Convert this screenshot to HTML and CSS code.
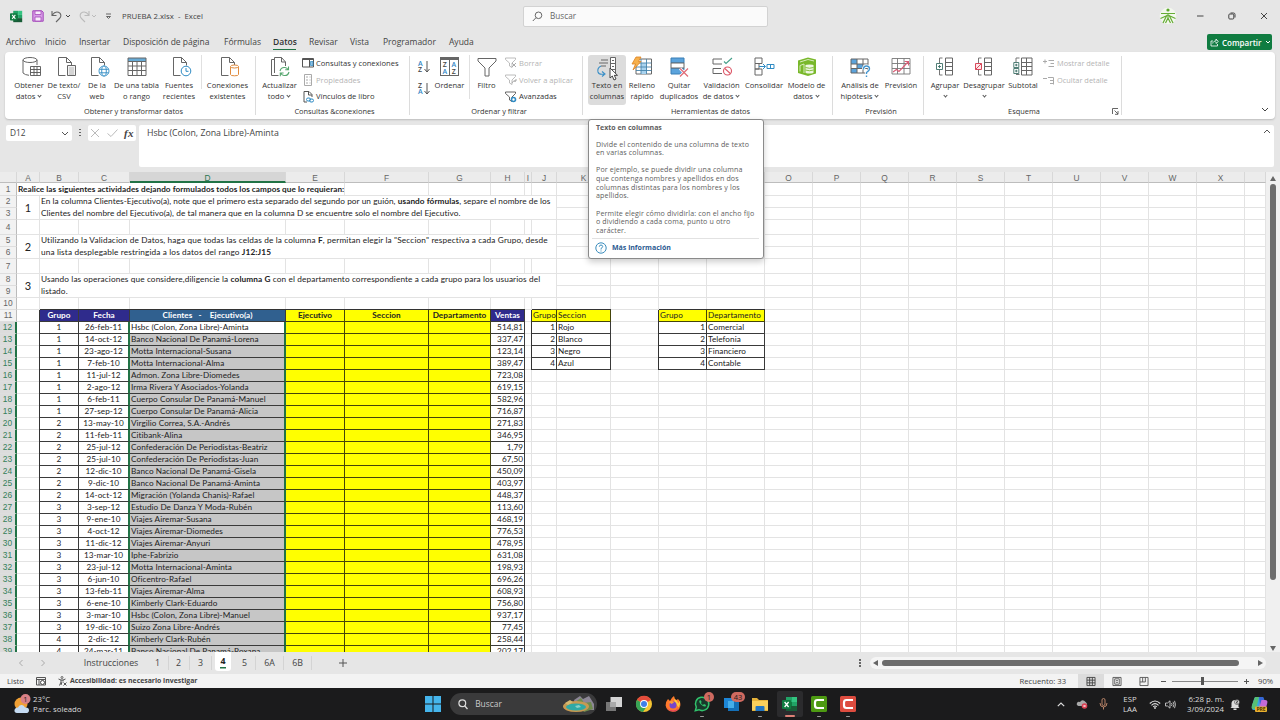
FILE: index.html
```html
<!DOCTYPE html>
<html lang="es">
<head>
  <meta charset="UTF-8">
  <meta name="viewport" content="width=device-width, initial-scale=1.0">
  <title>PRUEBA 2.xlsx - Excel</title>
  <link rel="stylesheet" href="styles.css">
</head>
<body>

<svg class="defs">
  <symbol id="chev" viewBox="0 0 6 4"><path d="M1 1l2 2 2-2" fill="none" stroke="currentColor"/></symbol>
  <symbol id="doc" viewBox="0 0 20 20"><path d="M1.500 .5h8l5 5v3M1.500 .5v18h7M9.500 .5v5h5" fill="none" stroke="#666"/></symbol>
  <symbol id="funnel" viewBox="0 0 12 12"><path d="M.5 1h10v1.500L7 6v4.500L4.500 9V6L.5 2.500z" fill="none" stroke="currentColor" stroke-width=".9"/></symbol>
  <symbol id="excel" viewBox="0 0 16 16"><path fill="#21a366" d="M4 1h6v5H4z"/><path fill="#33c481" d="M10 1h5v5h-5z"/><path fill="#107c41" d="M4 6h6v4H4z"/><path fill="#21a366" d="M10 6h5v4h-5z"/><path fill="#185c37" d="M4 10h11v5H4z"/><rect y="4" width="9" height="9" rx="1" fill="#107c41"/><path d="M2.600 6l4 5M6.600 6l-4 5" stroke="#fff" stroke-width="1.300"/></symbol>
  <symbol id="camt" viewBox="0 0 16 16"><rect width="16" height="16" rx="1.500" fill="currentColor"/><path d="M13 4H6.500Q4 4 4 6.500v3Q4 12 6.500 12H13" fill="none" stroke="#fff" stroke-width="2.200"/></symbol>
</svg>

<header class="titlebar">
  <svg class="i-xl" width="13" height="13"><use href="#excel"/></svg>
  <svg class="i-save" width="12" height="12" viewBox="0 0 12 12"><path d="M.8.8h9l1.400 1.400v9H.8z" fill="#d79be6" stroke="#a347ba"/><path d="M3 1h6v3.500H3zM3 7h6v4H3z" fill="#f8ecfb" stroke="#a347ba" stroke-width=".8"/></svg>
  <svg class="i-undo" width="12" height="13" viewBox="0 0 12 13"><path d="M1 1v4.500h4.500M1.300 5C3 2.500 5.500 1.500 7.500 2.300c3 1.200 3 4.400 1 6.200L5 12" fill="none" stroke="#666" stroke-width="1.100"/></svg>
  <svg class="i-c1" width="6" height="4"><use href="#chev"/></svg>
  <svg class="i-redo" width="12" height="13" viewBox="0 0 12 13"><path d="M11 1v4.500H6.500M10.700 5C9 2.500 6.500 1.500 4.500 2.300c-3 1.200-3 4.400-1 6.200L7 12" fill="none" stroke="#bbb" stroke-width="1.100"/></svg>
  <svg class="i-c2" width="6" height="4"><use href="#chev"/></svg>
  <svg class="i-c3" width="7" height="7" viewBox="0 0 7 7"><path d="M1 1h5M1.500 3.500h4l-2 2z" fill="none" stroke="#666"/></svg>
  <span class="doc-name">PRUEBA 2.xlsx&nbsp; -&nbsp; Excel</span>
  <div class="search">
    <svg width="11" height="11" viewBox="0 0 11 11"><circle cx="6.500" cy="4.300" r="3.300" fill="none" stroke="#666"/><path d="M4 6.700L.8 10" stroke="#666"/></svg>
    <span>Buscar</span>
  </div>
  <div class="win-buttons">
    <svg width="18" height="18" viewBox="0 0 18 18"><circle cx="9" cy="9" r="8.300" fill="#f3f8ee"/><circle cx="9" cy="3" r="1.600" fill="#5da82c"/><path d="M2 6.500h14M9 6v5M8 8L4 16M10 8l4 8M6.500 16L9 11l2.500 5M1.500 11.500L7 9M16.500 11.500L11 9" stroke="#66ad35" stroke-width="1.200" fill="none"/></svg>
    <svg width="8" height="8" viewBox="0 0 8 8"><path d="M1 4h6.500" stroke="#444"/></svg>
    <svg width="8" height="8" viewBox="0 0 8 8"><rect x=".8" y="2" width="5" height="5" rx="1" fill="none" stroke="#444"/><path d="M2.500 1h3Q7 1 7 2.500v3" fill="none" stroke="#444"/></svg>
    <svg width="8" height="8" viewBox="0 0 8 8"><path d="M1 1l6 6M7 1L1 7" stroke="#444"/></svg>
  </div>
</header>

<nav class="tabs">
  <span class="t1">Archivo</span><span class="t2">Inicio</span><span class="t3">Insertar</span><span class="t4">Disposición de página</span><span class="t5">Fórmulas</span><span class="t6 on">Datos</span><span class="t7">Revisar</span><span class="t8">Vista</span><span class="t9">Programador</span><span class="t10">Ayuda</span>
  <button class="share">
    <svg width="9" height="9" viewBox="0 0 9 9"><path d="M3 3H1v5h6.500V6M2.700 5.500C3 3.500 4.500 3 6 3V1l2.300 2.500L6 5.500V4" fill="none" stroke="#fff" stroke-width=".8"/></svg>
    <span>Compartir</span>
    <svg width="6" height="4"><use href="#chev"/></svg>
  </button>
</nav>

<section class="ribbon">
  <div class="group g1">
    <div class="tools">
      <div class="tool w36"><svg viewBox="0 0 20 20"><ellipse cx="8" cy="3" rx="7" ry="2.500" fill="none" stroke="#666"/><path d="M1 3v13q2 2 6 2.300M15 3v5" fill="none" stroke="#666"/><path d="M8.500 9.500h10v9h-10zM8.500 12.500h10M8.500 15.500h10M12 9.500v9M15 9.500v9" fill="#fff" stroke="#555" stroke-width=".9"/></svg><b>Obtener<br>datos <i></i></b></div>
      <div class="tool w34"><svg viewBox="0 0 20 20"><use href="#doc"/><path d="M10.500 8.500h8v10h-8z" fill="#f4f4f4" stroke="#666"/><path d="M12 11h5M12 13h5M12 15h5M12 17h5" stroke="#999" stroke-width=".7"/></svg><b>De texto/<br>CSV</b></div>
      <div class="tool w32"><svg viewBox="0 0 20 20"><use href="#doc"/><g fill="#fff" stroke="#2f8bc4" stroke-width=".9"><circle cx="14" cy="14" r="5"/><ellipse cx="14" cy="14" rx="2.300" ry="5"/><path d="M9.500 12.300h9M9.500 15.800h9" /></g></svg><b>De la<br>web</b></div>
      <div class="tool w47 mid"><svg viewBox="0 0 20 20"><path d="M1 1h18v17.500H1z" fill="#fff"/><path d="M1 1h18v3.500H1z" fill="#67abd6"/><path d="M1 1h18v17.500H1zM1 4.500h18M1 9h18M1 13.500h18M5.500 4.500v14M10 4.500v14M14.500 4.500v14" fill="none" stroke="#666"/></svg><b>De una tabla<br>o rango</b></div>
      <div class="tool w38"><svg viewBox="0 0 20 20"><use href="#doc"/><circle cx="14" cy="14" r="4.800" fill="#fff" stroke="#2f8bc4"/><path d="M14 11v3.300h2.500" fill="none" stroke="#2f8bc4"/></svg><b>Fuentes<br>recientes</b></div>
      <hr>
      <div class="tool w47"><svg viewBox="0 0 20 20"><use href="#doc"/><path d="M10.500 9.500v8q0 1.300 4 1.300t4-1.300v-8" fill="#fff" stroke="#e08a3c"/><ellipse cx="14.500" cy="9.500" rx="4" ry="1.500" fill="#fff" stroke="#e08a3c"/></svg><b>Conexiones<br>existentes</b></div>
    </div>
    <div class="caption">Obtener y transformar datos</div>
  </div>
  <div class="group g2">
    <div class="tools">
      <div class="tool w41"><svg viewBox="0 0 20 20"><path d="M4.500 2.500H1.500v16h7" fill="none" stroke="#666"/><path d="M4.500 16V.5h7l4 4.500v4M11.500 .5V5h4" fill="none" stroke="#666"/><path d="M10 14q1-4 5-3.500 2 .3 3 2M18.500 9.500v3.300h-3.300M19 15q-1 4-5 3.500-2-.3-3-2M10.300 19.300v-3.300h3.300" fill="none" stroke="#55a66e" stroke-width="1.100"/></svg><b>Actualizar<br>todo <i></i></b></div>
      <div class="list">
        <span><svg viewBox="0 0 12 12"><path d="M.5 1.500h11v8.500H.5z" fill="#fff" stroke="#555"/><path d="M.5 2.500h11" stroke="#555"/><path d="M7.500 3v7" stroke="#555"/><path d="M8.500 4.500h2.500v4H8.500z" fill="#8fc1e3" stroke="#2f8bc4" stroke-width=".7"/></svg>Consultas y conexiones</span>
        <span class="off"><svg viewBox="0 0 12 12"><path d="M2.500 .5h7v11h-7zM4 3h2M4 6h2M4 9h2M7.500 3h1M7.500 6h1M7.500 9h1" fill="none" stroke="#aaa"/></svg>Propiedades</span>
        <span><svg viewBox="0 0 12 12"><path d="M5 11H2V.5h5l3 3V6M6.500 .5v3.500H10" fill="none" stroke="#555"/><rect x="4.500" y="7" width="4" height="3" rx="1.500" fill="none" stroke="#2f8bc4"/><rect x="7.500" y="8" width="4" height="3" rx="1.500" fill="none" stroke="#2f8bc4"/></svg>Vínculos de libro</span>
      </div>
    </div>
    <div class="caption">Consultas &amp;conexiones</div>
  </div>
  <div class="group g3">
    <div class="tools">
      <div class="az">
        <div><em><u>A</u><s>Z</s></em><svg width="6" height="12" viewBox="0 0 6 12"><path d="M3 0v11M.5 8L3 11l2.500-3" fill="none" stroke="#555"/></svg></div>
        <div><em><s>Z</s><u>A</u></em><svg width="6" height="12" viewBox="0 0 6 12"><path d="M3 0v11M.5 8L3 11l2.500-3" fill="none" stroke="#555"/></svg></div>
      </div>
      <div class="tool w33"><div class="sort"><em><s>Z</s><u>A</u></em><em><u>A</u><s>Z</s></em></div><b>Ordenar</b></div>
      <hr>
      <div class="tool w33 filter"><svg viewBox="0 0 20 20"><path d="M1 1.500h18v2.500l-7 7v8H8v-8L1 4z" fill="none" stroke="#666"/></svg><b>Filtro</b></div>
      <div class="list l3">
        <span class="off"><svg><use href="#funnel"/><path d="M7 6l4 4M11 6l-4 4" stroke="#aaa"/></svg>Borrar</span>
        <span class="off"><svg><use href="#funnel"/><path d="M7 9q1-3 4-2M11 5v2H9" fill="none" stroke="#aaa"/></svg>Volver a aplicar</span>
        <span><svg><use href="#funnel"/><circle cx="8.500" cy="8.500" r="2" fill="#fff" stroke="#2f8bc4" stroke-width="1.600"/></svg>Avanzadas</span>
      </div>
    </div>
    <div class="caption">Ordenar y filtrar</div>
  </div>
  <div class="group g4">
    <div class="tools">
      <div class="tool w38 hot"><svg viewBox="0 0 20 20"><path d="M4 3h7M2 6h9M4 9h5" stroke="#666"/><path d="M13.500 .5h5v18h-5zM13.500 6.500h5M13.500 12.500h5M15 3.500h2M15 9.500h2" fill="#fff" stroke="#666"/><path d="M4 9q-4 2-3 6 1 3 6 2M5 14.500L8 17l-3 2.500" fill="none" stroke="#3a8fc7" stroke-width="1.100"/></svg><b>Texto en<br>columnas</b>
        <svg class="cursor" viewBox="0 0 10 14"><path d="M1 1v10l2.300-2 1.700 4 2-1-1.700-3.700H8.500z" fill="#fff" stroke="#333" stroke-width=".9"/></svg></div>
      <div class="tool w32"><svg viewBox="0 0 20 20"><path d="M4 2h15.500v15H4z" fill="#fff" stroke="#666"/><path d="M9 6h5.500v11H9z" fill="#a9d3ef"/><path d="M4 6h15.500M4 10h15.500M4 13.500h15.500M9 2v15M14.500 2v15" stroke="#4784ab" stroke-width=".9"/><path d="M4 0h5L6.500 4.500H9L1 13l2.500-6H0z" fill="#f6b04c" stroke="#dd8120" stroke-width=".8"/></svg><b>Relleno<br>rápido</b></div>
      <div class="tool w42"><svg viewBox="0 0 20 20"><path d="M2 1h13v5H2zM2 11h13v6H2z" fill="#5ba3dc" stroke="#3a7fb5"/><path d="M2 6h13v5H2z" fill="#fff" stroke="#666"/><path d="M11 11.500l8 8M19 11.500l-8 8" stroke="#fff" stroke-width="3"/><path d="M11 11.500l8 8M19 11.500l-8 8" stroke="#e06a75" stroke-width="1.200"/></svg><b>Quitar<br>duplicados</b></div>
      <div class="tool w43"><svg viewBox="0 0 20 20"><path d="M10 2H1v5h9M9 11.500H1v5h9" fill="none" stroke="#666"/><path d="M12 4.500l2 2L20 1" fill="none" stroke="#45a08a" stroke-width="1.100"/><circle cx="15.500" cy="14" r="4" fill="#fff" stroke="#dc5566" stroke-width="1.100"/><path d="M12.800 11.500l5.500 5" stroke="#dc5566" stroke-width="1.100"/></svg><b>Validación<br>de datos <i></i></b></div>
      <div class="tool w42"><svg viewBox="0 0 20 20"><path d="M1 1h7v5.500H1zM1 6.500h4V12H1zM1 12h7v6H1z" fill="#fff" stroke="#666"/><path d="M5 9.500h6M9 7l2.500 2.500L9 12" fill="none" stroke="#2f8bc4"/><path d="M13 7.500h7v4h-7zM16.500 7.500v4" fill="#fff" stroke="#2f8bc4"/></svg><b>Consolidar</b></div>
      <div class="tool w43"><svg viewBox="0 0 20 20"><path d="M1 3.500L11 .5l8 2v14l-8 2.500-10-3z" fill="#79b82b"/><path d="M3 5l8-2.500 6 1.500M3 8.500v6M3 8.500l4-1.500v9" fill="none" stroke="#d7edbd"/><path d="M8.500 8.500q0-1 4-1t4 1v7q0 1-4 1t-4-1z" fill="#eef7e2"/><path d="M8.500 10.500q4 1.500 8 0M8.500 13q4 1.500 8 0" fill="none" stroke="#79b82b" stroke-width=".9"/></svg><b>Modelo de<br>datos <i></i></b></div>
    </div>
    <div class="caption">Herramientas de datos</div>
  </div>
  <div class="group g5">
    <div class="tools">
      <div class="tool w44"><svg viewBox="0 0 20 20"><path d="M1 2h17v14H1z" fill="#fff"/><path d="M1 2h6v5H1zM7 7h6v4.500H7zM1 11.500h6V16H1z" fill="#5ba3dc"/><path d="M1 2h17v14H1zM1 7h17M1 11.500h17M7 2v14M13 2v14" fill="none" stroke="#666"/><path d="M13.500 12.500q0-3.500 3-3.500t3 3q0 2-3 3.500v1.500" stroke="#fff" stroke-width="3" fill="none"/><path d="M13.500 12.500q0-3.500 3-3.500t3 3q0 1.500-3 3.500v1.500M16.500 18.500V20" stroke="#4395cf" stroke-width="1.400" fill="none"/></svg><b>Análisis de<br>hipótesis <i></i></b></div>
      <div class="tool w38"><svg viewBox="0 0 20 20"><path d="M1 1.500h18V17H1zM1 6.500h18M1 11.500h18M6.500 1.500V17M13 1.500V17" fill="#fff" stroke="#777" stroke-width=".9"/><path d="M2 15l3.500-2.500 2.500 2 9-9.500M13.500 4.500h4v4" fill="none" stroke="#d85c74" stroke-width="1.100"/></svg><b>Previsión</b></div>
    </div>
    <div class="caption">Previsión</div>
  </div>
  <div class="group g6">
    <div class="tools">
      <div class="tool w38"><svg viewBox="0 0 20 20"><path d="M7.500 1H4.500v6M4.500 12v6h3" fill="none" stroke="#777"/><path d="M1.500 6.500h6v6h-6zM3 9.500h3M4.500 8v3" fill="#fff" stroke="#3d7068" stroke-width=".9"/><path d="M10.500 1h7v17h-7zM10.500 5.500h7M10.500 9.500h7M10.500 13.500h7" fill="#fff" stroke="#666"/></svg><b>Agrupar<br><i></i></b></div>
      <div class="tool w40"><svg viewBox="0 0 20 20"><path d="M7.500 1H4.500v6M4.500 12v6h3" fill="none" stroke="#777"/><path d="M1.500 6.500h6v6h-6zM1.500 12.500l6-6" fill="#fde8ea" stroke="#d84a5c"/><path d="M10.500 1h7v17h-7zM10.500 5.500h7M10.500 9.500h7M10.500 13.500h7" fill="#fff" stroke="#666"/></svg><b>Desagrupar<br><i></i></b></div>
      <div class="tool w38"><svg viewBox="0 0 20 20"><path d="M6.500 1H3v4M3 17.500h3.500" fill="none" stroke="#777"/><path d="M.8 5.500h5v5h-5zM.8 11.500h5v5h-5zM2 8h2.500M3.300 6.800v2.500M2 14h2.500M3.300 12.800v2.500" fill="#fff" stroke="#3d7068" stroke-width=".9"/><path d="M8.500 1H19v17H8.500zM8.500 5.500H19M8.500 9.500H19M8.500 13.500H19M13.500 1v17" fill="#fff" stroke="#666"/></svg><b>Subtotal</b></div>
      <div class="list l6">
        <span class="off"><svg viewBox="0 0 12 12"><path d="M0 3.500h4M2 1.500v4M5.500 2.500H11M7.500 5.500H11M5.500 8.500H11" stroke="#aaa"/></svg>Mostrar detalle</span>
        <span class="off"><svg viewBox="0 0 12 12"><path d="M0 3.500h4M5 2.500h5.500v7M7 5.500h3M7 8.500h3" fill="none" stroke="#aaa"/></svg>Ocultar detalle</span>
      </div>
    </div>
    <div class="caption">Esquema</div>
    <svg class="launcher" width="7" height="7" viewBox="0 0 7 7"><path d="M.5 6V.5H6M2.500 2.500l3.500 3.500M6 3v3.300H3" fill="none" stroke="#555" stroke-width=".9"/></svg>
  </div>
  <svg class="collapse" width="8" height="5" viewBox="0 0 8 5"><path d="M1 1l3 3 3-3" fill="none" stroke="#444"/></svg>
</section>

<section class="formula">
  <div class="namebox"><span>D12</span><svg width="8" height="5" viewBox="0 0 8 5"><path d="M1 1l3 3 3-3" fill="none" stroke="#555"/></svg></div>
  <div class="vdots"></div>
  <div class="fx"><svg width="8" height="8" viewBox="0 0 8 8"><path d="M0 0l8 8M8 0L0 8" stroke="#bbb"/></svg><svg width="11" height="8" viewBox="0 0 11 8"><path d="M.5 4.500L4 7.500 10.500.5" fill="none" stroke="#bbb"/></svg><em>fx</em></div>
  <div class="input"><span>Hsbc (Colon, Zona Libre)-Aminta</span><svg width="8" height="5" viewBox="0 0 8 5"><path d="M1 4l3-3 3 3" fill="none" stroke="#555"/></svg></div>
</section>

<main class="work">
  <div class="sheet" id="sheet"></div>
  <div class="vscroll"><div class="up"></div><div class="thumb"></div><div class="down"></div></div>
</main>

<div class="sheet-tabs">
  <svg class="nav" viewBox="0 0 6 8"><path d="M4.500 1L1.500 4l3 3" fill="none" stroke="#aaa"/></svg>
  <svg class="nav" viewBox="0 0 6 8"><path d="M1.500 1l3 3-3 3" fill="none" stroke="#aaa"/></svg>
  <span class="s0">Instrucciones</span><span class="s1">1</span><span>2</span><span>3</span><span class="cur">4</span><span>5</span><span class="s6">6A</span><span class="s6">6B</span>
  <svg class="plus" viewBox="0 0 8 8"><path d="M0 4h8M4 0v8" stroke="#555"/></svg>
  <div class="vdots"></div>
  <div class="hscroll"><div class="left"></div><div class="thumb"></div><div class="right"></div></div>
</div>

<footer class="status">
  <span class="listo">Listo</span>
  <svg class="rec" width="10" height="9" viewBox="0 0 10 9"><path d="M.5.500h9v7.500h-9zM.5 2.500h9M3 2.500V8" fill="none" stroke="#555"/><circle cx="6.500" cy="5.500" r="2" fill="#fff" stroke="#444"/></svg>
  <svg class="acc" width="9" height="10" viewBox="0 0 9 10"><circle cx="4" cy="1.500" r="1" fill="none" stroke="#444" stroke-width=".8"/><path d="M.5 3L3 4v2L1.500 9.500M7.500 3L5 4v1.500M3 4h2M4 6l-1 3M5.500 6.500l3 3M8.500 6.500l-3 3" fill="none" stroke="#444" stroke-width=".9"/></svg>
  <strong>Accesibilidad: es necesario investigar</strong>
  <span class="count">Recuento: 33</span>
  <span class="view on"><svg viewBox="0 0 10 10"><path d="M.5.500h9v9h-9zM.5 3.500h9M.5 6.500h9M3.500.5v9M6.500.5v9" fill="none" stroke="#444"/></svg></span>
  <span class="view"><svg viewBox="0 0 10 10"><path d="M.5.500h9v9h-9zM2.500 2h5v6h-5zM4 4h2M4 6h2" fill="none" stroke="#555"/></svg></span>
  <span class="view"><svg viewBox="0 0 10 10"><path d="M.5.500h9v9h-9zM.5 5.500h6V.5M3.500.5v5" fill="none" stroke="#555"/></svg></span>
  <div class="zoom"><i></i><div class="track"><b></b></div><i class="p"></i></div>
  <span class="pct">90%</span>
</footer>

<div class="taskbar">
  <svg class="weather" width="20" height="22" viewBox="0 0 20 22"><circle cx="8" cy="11" r="6.500" fill="#f0a035"/><path d="M4 20q-3-.5-2.500-3T5 14.500q1-3 4-2.500 2 0 3 2.500 4-.3 4 2.700 0 2.800-3 2.800z" fill="#c5dbf2"/><circle cx="12.500" cy="6" r="5" fill="#d98086"/><text x="12.500" y="9" font-size="7.500" text-anchor="middle" fill="#222">1</text></svg>
  <div class="temp">23°C<br>Parc. soleado</div>
  <div class="apps">
    <svg viewBox="0 0 16 16"><path fill="#45b5ec" d="M0 0h7.500v7.500H0zM8.500 0H16v7.500H8.500zM0 8.500h7.500V16H0zM8.500 8.500H16V16H8.500z"/></svg>
    <div class="pill"><svg width="10" height="11" viewBox="0 0 10 11"><circle cx="4.300" cy="4.300" r="3.400" fill="none" stroke="#ddd" stroke-width="1.200"/><path d="M6.800 7l2.700 3" stroke="#ddd" stroke-width="1.300"/></svg><span>Buscar</span>
      <svg class="scene" width="34" height="18" viewBox="0 0 34 18"><path d="M12 5l6-4 3 3 6-3 5 8v6H14z" fill="#8d8796"/><path d="M13 7l6-4 3 5 7-1 2 7-9 3z" fill="#6f8b4e"/><ellipse cx="14" cy="11.500" rx="13" ry="5.500" fill="#c69a52"/><ellipse cx="14" cy="12" rx="10" ry="3.500" fill="#2fa9a5"/><path d="M3 8l5-3 3 2-5 3z" fill="#d6b870"/><path d="M13 11l4-1 2 2-4 1z" fill="#8ad1c7"/></svg></div>
    <svg viewBox="0 0 16 16"><path d="M0 6h10v9H0z" fill="#777"/><path d="M4.500 1H16v10H4.500z" fill="#d4d4d4"/><path d="M4.500 6H10v5H4.500z" fill="#aaa"/></svg>
    <svg viewBox="0 0 16 16"><circle cx="8" cy="8" r="8" fill="#f5c532"/><path d="M8 8L1 4a8 8 0 0 1 14 0z" fill="#e44c3c"/><path d="M8 8L1 4a8 8 0 0 0 6 12l4-6z" fill="#37a456"/><circle cx="8" cy="8" r="3.900" fill="#fff"/><circle cx="8" cy="8" r="3" fill="#3f7fe8"/></svg>
    <svg viewBox="0 0 16 16"><path d="M3 3l2 2q2-4 4-5 0 3 2.500 4L13 3q3 3 2.300 7A7.500 7.500 0 0 1 .6 9.500Q.3 6 3 3z" fill="#ff7a2c"/><path d="M9 .5q0 3 2.500 4l2 3 1.500-3q.7 4-1.500 7l-4-6z" fill="#ffc93c"/><path d="M1 9q2 6 8 5.500 4-.5 5-4-1 5-6 5T1 9z" fill="#e0356b"/><circle cx="8" cy="9" r="3.500" fill="#7746c9"/><path d="M4 6q3-2 5 .5L6.500 8z" fill="#ff9c36"/></svg>
    <div class="app dot"><svg viewBox="0 0 16 16"><path d="M1.300 14.700l1-3.500a6.700 6.700 0 1 1 2.500 2.500z" fill="#18392a" stroke="#31c26c" stroke-width="1.500"/><path d="M5.500 4.500q-1 1.500 1.500 4t4.500 2l.5-1.500-2-1-1 1q-1.500-.7-2-2l.6-1-.8-1.700z" fill="#31c26c"/></svg><em>1</em></div>
    <div class="app"><svg viewBox="0 0 16 16"><path d="M1 2h10v10H1z" fill="#1d86d6"/><path d="M5 5h11v10H5z" fill="#1470b8"/><path d="M5 5h6v7H5z" fill="#46aeea"/></svg><em class="wide">43</em></div>
    <div class="app dot"><svg viewBox="0 0 16 16"><path d="M0 2h5l2 2h9v11H0z" fill="#e6b33a"/><path d="M0 5h16v9H0z" fill="#fad05c"/><path d="M3.500 15v-4q0-1 1-1h7q1 0 1 1v4z" fill="#2277c4"/></svg></div>
    <div class="app focus"><svg><use href="#excel"/></svg></div>
    <div class="app dot green"><svg><use href="#camt"/></svg></div>
    <div class="app dot red"><svg><use href="#camt"/></svg></div>
  </div>
  <div class="tray">
    <svg class="y1" width="8" height="5" viewBox="0 0 8 5"><path d="M.8 4.200L4 1l3.200 3.200" fill="none" stroke="#ddd" stroke-width="1.200"/></svg>
    <svg class="y2" width="12" height="10" viewBox="0 0 12 10"><path d="M2.500 7Q0 6 1 4t3-1q2-3 4.500-1T11 5v2z" fill="#aaa"/><circle cx="8.500" cy="7" r="2.800" fill="#d94254"/><path d="M7.500 6l2 2M9.500 6l-2 2" stroke="#fff" stroke-width=".8"/></svg>
    <svg class="y3" width="9" height="12" viewBox="0 0 9 12"><rect x="3" y=".5" width="3" height="7" rx="1.500" fill="none" stroke="#b98468"/><path d="M1 5q0 4 3.500 4T8 5M4.500 9v2.500" fill="none" stroke="#b98468"/></svg>
    <div class="lang">ESP<br>LAA</div>
    <svg class="y4" width="12" height="9" viewBox="0 0 12 9"><path d="M.8 3.500q5.200-5 10.400 0M2.500 5.300q3.500-3.300 7 0M4.200 6.800q1.800-1.500 3.600 0" fill="none" stroke="#ddd" stroke-width="1.100"/><circle cx="6" cy="8" r=".9" fill="#ddd"/></svg>
    <svg class="y5" width="11" height="9" viewBox="0 0 11 9"><path d="M.5 3h2L5 .8v7.400L2.500 6h-2zM6.500 3q1 1.500 0 3M8 1.800q2 2.700 0 5.400M9.500.8q2 3.700 0 7.400" fill="none" stroke="#ccc" stroke-width=".9"/></svg>
    <div class="clock">6:28 p. m.<br>3/09/2024</div>
    <svg class="y6" width="10" height="11" viewBox="0 0 10 11"><path d="M1.500 8V4Q2 1 5 1t3.500 3v4L9.500 9h-9zM3.500 9.500h3V11h-3z" fill="#ddd"/><circle cx="7" cy="3" r="2.500" fill="#ddd" stroke="#222" stroke-width=".5"/><path d="M6 2h2L6 4h2" fill="none" stroke="#222" stroke-width=".6"/></svg>
    <svg class="y7" width="17" height="17" viewBox="0 0 17 17"><path d="M5 1h6q2 0 1.500 2L10 12q-.5 2-2.500 2H3Q0 14 1 10l2-7q.5-2 2-2z" fill="#35a8e0"/><path d="M4 1h4L5 13H2Q0 13 1 9z" fill="#57bf75"/><path d="M9 4h5q3 0 2.300 3L15 12q-.5 2-2.500 2H8z" fill="#c46ad8"/><path d="M8 1h4l1.500 3h-3L9 9z" fill="#3565d6"/><rect x="4" y="10.500" width="12" height="5.500" rx="1" fill="#eab02f"/><text x="10" y="15.200" font-size="5" font-weight="bold" text-anchor="middle" fill="#4a3500">PRE</text></svg>
  </div>
</div>

<div class="tip">
  <h4>Texto en columnas</h4>
  <p>Divide el contenido de una columna de texto<br>en varias columnas.</p>
  <p>Por ejemplo, se puede dividir una columna<br>que contenga nombres y apellidos en dos<br>columnas distintas para los nombres y los<br>apellidos.</p>
  <p>Permite elegir cómo dividirla: con el ancho fijo<br>o dividiendo a cada coma, punto u otro<br>carácter.</p>
  <div class="more"><svg width="12" height="12" viewBox="0 0 12 12"><circle cx="6" cy="6" r="5.200" fill="none" stroke="#3b8dbd"/><path d="M4.300 4.700Q4.500 3 6 3t1.700 1.600Q7.700 5.500 6 6.500v1M6 8.500v1" fill="none" stroke="#3b8dbd"/></svg>Más información</div>
</div>

<script src="sheet.js"></script>
</body>
</html>
```
FILE: styles.css
```css
* { box-sizing: border-box; margin: 0; padding: 0; }
body { width: 1280px; height: 720px; overflow: hidden; display: flex; flex-direction: column; background: #e6e6e6; color: #444; font-family: "Open Sans", "Noto Sans", sans-serif; font-size: 8.5px; line-height: 12px; position: relative; }
svg { display: block; flex: none; overflow: visible; }
.defs { position: absolute; width: 0; height: 0; }

/* title bar */
.titlebar { height: 32px; flex: none; display: flex; align-items: center; padding-left: 10px; }
.i-save { margin-left: 9px; }
.i-undo { margin-left: 7px; }
.i-c1 { margin-left: 2px; }
.i-redo { margin-left: 7px; }
.i-c2 { margin-left: 1px; color: #bbb; }
.i-c3 { margin-left: 8px; }
.doc-name { width: 401px; margin-left: 10px; font-size: 7.8px; }
.search { width: 245px; height: 21px; background: #fafafa; border: 1px solid #d2d2d2; border-radius: 2px; display: flex; align-items: center; padding-left: 8px; gap: 7px; color: #666; font-size: 8.2px; }
.win-buttons { margin-left: auto; display: flex; align-items: center; gap: 24px; padding-right: 12px; }
.win-buttons svg:first-child { margin-right: -5px; }

/* tabs */
.tabs { height: 20px; flex: none; position: relative; display: flex; align-items: center; padding-left: 6px; }
.tabs span { white-space: nowrap; }
.t1 { width: 39px; } .t2 { width: 34px; } .t3 { width: 44px; } .t4 { width: 101px; } .t5 { width: 49px; } .t6 { width: 23px; margin-right: 13px; }
.t7 { width: 41px; } .t8 { width: 33px; } .t9 { width: 66px; }
.tabs .on { font-weight: 600; color: #333; height: 16px; line-height: 12px; padding-top: 2px; border-bottom: 1.5px solid #217346; }
.share { margin-left: auto; margin-right: 8px; width: 65px; height: 16px; background: #107c41; color: #fff; border: 0; border-radius: 2px; font: 600 8px "Open Sans", sans-serif; display: flex; align-items: center; gap: 3px; padding-left: 3px; }

/* ribbon */
.ribbon { height: 67px; flex: none; margin: 0 5px; background: #fff; border-radius: 4px; box-shadow: 0 1px 2px #bbb; display: flex; font-size: 7.6px; line-height: 10.5px; position: relative; color: #333; }
.group { position: relative; display: flex; flex-direction: column; padding-left: 5px; }
.group::after { content: ""; position: absolute; right: 0; top: 4px; bottom: 4px; width: 1px; background: #dcdcdc; }
.g1 { width: 251px; padding-left: 6px; } .g2 { width: 154px; padding-left: 3px; } .g3 { width: 173px; } .g4 { width: 250px; } .g5 { width: 91px; } .g6 { width: 198px; padding-left: 2px; }
.tools { display: flex; height: 53px; padding-top: 3px; }
.tools hr { border: 0; width: 1px; height: 34px; background: #e0e0e0; margin-right: 2px; margin-left: 3px; }
.g3 hr { height: 44px; }
.tool { position: relative; display: flex; flex-direction: column; align-items: center; padding-top: 2px; height: 50px; }
.tool > svg { width: 20px; height: 20px; }
.g1 .tool > svg { margin-left: 5px; }
.g1 .mid > svg { margin-left: 0; }
.tool b { font-weight: 400; text-align: center; white-space: nowrap; margin-top: 3px; }
.tool i { display: inline-block; width: 3px; height: 3px; border: solid #555; border-width: 0 1px 1px 0; transform: rotate(45deg); margin: 0 1px 2px; }
.w32 { width: 32px; } .w33 { width: 33px; } .w34 { width: 34px; } .w36 { width: 36px; } .w38 { width: 38px; } .w40 { width: 40px; } .w41 { width: 41px; } .w42 { width: 42px; } .w43 { width: 43px; } .w44 { width: 44px; } .w47 { width: 47px; }
.hot { background: #dcdcdc; border-radius: 3px; }
.tool .cursor { position: absolute; left: 21px; top: 12px; width: 10px; height: 14px; }
.tool.filter { margin-left: -2px; margin-right: 2px; }
.list { display: flex; flex-direction: column; padding-left: 2px; }
.list span { height: 17.5px; display: flex; align-items: center; gap: 2px; white-space: nowrap; }
.list svg { width: 12px; height: 12px; color: #555; }
.l3 { padding-left: 0; }
.l6 { padding-left: 1px; }
.l6 span { height: 17px; font-size: 7.4px; }
.off, .list .off svg { color: #b4b4b4; }
.caption { text-align: center; line-height: 12px; font-size: 7.4px; }
.az { width: 18px; display: flex; flex-direction: column; gap: 8px; padding: 5px 0 0 3px; }
.az div { display: flex; gap: 1px; align-items: center; height: 14px; }
.az em, .sort em { display: flex; flex-direction: column; font: 600 7px/6.5px "Open Sans", sans-serif; }
.ribbon u, .ribbon s { text-decoration: none; color: #444; }
.ribbon u { color: #2f86c6; }
.sort { width: 19px; height: 19px; border: 1px solid #666; border-top-width: 3px; display: flex; margin-bottom: 1px; }
.sort em { width: 50%; align-items: center; line-height: 7px; padding-top: 1px; }
.sort em:first-child { border-right: 1px solid #666; }
.launcher { position: absolute; right: 3px; bottom: 4px; }
.collapse { position: absolute; right: 6px; bottom: 7px; }

/* formula bar */
.formula { height: 53px; flex: none; display: flex; padding: 6px 6px 0; font-size: 8.8px; }
.namebox { width: 66px; height: 16px; background: #fff; border-radius: 2px; display: flex; align-items: center; justify-content: space-between; padding: 0 3px 0 4px; font-size: 8.3px; }
.vdots { width: 2px; height: 8px; background: repeating-linear-gradient(#666 0 1.5px, transparent 1.5px 3px); }
.formula .vdots { margin: 4px 7px 0; }
.fx { width: 48px; height: 16px; background: #fff; border-radius: 2px; display: flex; align-items: center; gap: 8px; padding-left: 3px; }
.fx em { font: italic 600 11px "Liberation Serif", serif; margin-left: -2px; letter-spacing: .5px; }
.input { width: 1136px; height: 42px; margin-left: 3px; background: #fff; border-radius: 2px; display: flex; justify-content: space-between; padding: 2px 3px 0 8px; }
.input svg { margin-top: 2px; }

/* sheet */
.work { flex: none; height: 480px; display: flex; }
.sheet { width: 1266px; height: 480px; overflow: hidden; background: #fff; display: grid; font: 8.2px/11px Lato, sans-serif; letter-spacing: .05px; color: #222; }
.cell { border-right: 1px solid #e3e3e3; border-bottom: 1px solid #e3e3e3; white-space: nowrap; padding: 0 1px; overflow: visible; min-width: 0; min-height: 0; }
.colhead, .rowhead { font-family: "Liberation Sans", sans-serif; color: #666; background: #ececec; text-align: center; font-size: 8.4px; letter-spacing: 0; }
.colhead { border-bottom-color: #bdbdbd; border-right-color: #d8d8d8; line-height: 12px; }
.colhead.sel { background: #d6d6d6; color: #2a7550; border-bottom: 2px solid #217346; }
.rowhead { border-right-color: #bbb; border-bottom-color: #dedede; background: #f2f2f2; display: flex; align-items: center; justify-content: center; }
.rowhead.sel { background: #dcdcdc; color: #35805a; border-right: 2px solid #217346; }
.text { line-height: 12px; padding: 0 1px; font-size: 8.25px; }
.text p { margin-top: -1px; }
.ins1 { letter-spacing: .06px; }
.ins2 { letter-spacing: .13px; }
.ins3 { letter-spacing: .11px; }
.title { line-height: 12px; }
.num { font-size: 11px; display: flex; align-items: center; justify-content: center; }
.box { border-color: #3a3a3a; }
.c { text-align: center; }
.r { text-align: right; }
.yellow { background: #ff0; border-color: #44440a; }
.navy { background: #2f2b8c; color: #fff; font-weight: 700; }
.blue { background: #30608f; color: #fff; font-weight: 700; white-space: pre; }
.bold { font-weight: 700; }
.grey { background: #c6c6c6; }
.gl { border-right: 2px solid #217346; }
.top, .lft { position: relative; z-index: 1; }
.top { box-shadow: 0 -1px #333; }
.lft { box-shadow: -1px 0 #333; }
.top.lft { box-shadow: 0 -1px #333, -1px 0 #333; }

.vscroll { width: 14px; background: #f0f0f0; display: flex; flex-direction: column; align-items: center; padding: 4px 1px 0 0; }
.up, .down { border: 3px solid transparent; height: 5px; }
.up { border-bottom: 5px solid #666; border-top: 0; }
.down { border-top: 5px solid #666; border-bottom: 0; }
.vscroll .thumb { width: 6px; height: 396px; border-radius: 3px; background: #6c6c6c; margin: 3px 0 66px; }

/* sheet tabs */
.sheet-tabs { height: 22px; flex: none; background: #e6e6e6; display: flex; align-items: center; font-size: 8.8px; padding-left: 18px; }
.nav { width: 6px; height: 8px; margin-right: 16px; }
.sheet-tabs span { width: 22px; height: 14px; text-align: center; line-height: 14px; border-right: 1px solid #d4d4d4; }
.sheet-tabs .s0 { width: 84px; margin-left: 7px; border: 0; }
.sheet-tabs .s1 { margin-right: -1px; margin-left: -6px; }
.sheet-tabs .s6 { width: 28px; }
.sheet-tabs .cur { width: 16px; margin: 0 3px; height: 19px; border: 0; border-radius: 0 0 3px 3px; font-weight: 700; color: #222; align-self: flex-start; line-height: 19px; background: linear-gradient(#217346, #217346) 50% 15px / 6px 1.5px no-repeat #fff; }
.plus { width: 8px; height: 8px; margin-left: 27px; }
.sheet-tabs .vdots { margin-left: 512px; }
.hscroll { width: 396px; height: 12px; margin-left: 9px; background: #f5f5f5; border-radius: 6px; display: flex; align-items: center; padding: 0 3px; }
.left, .right { border: 3px solid transparent; width: 5px; height: 6px; }
.left { border-right: 5px solid #666; border-left: 0; }
.right { border-left: 5px solid #666; border-right: 0; margin-left: auto; }
.hscroll .thumb { width: 357px; height: 6px; border-radius: 3px; background: #6c6c6c; margin-left: 4px; }

/* status bar */
.status { height: 14px; flex: none; background: #f3f3f3; display: flex; align-items: center; font-size: 7.7px; padding-left: 7px; }
.listo { width: 29px; }
.acc { margin-left: 12px; margin-right: 3px; }
.status strong { font-weight: 700; font-size: 6.9px; white-space: nowrap; }
.count { width: 56px; margin-left: auto; margin-right: -3px; }
.view { width: 26.5px; height: 14px; display: flex; align-items: center; justify-content: center; margin-right: 0; }
.view svg { width: 10px; height: 9px; }
.view.on { background: #dcdcdc; margin-left: 5px; }
.zoom { display: flex; align-items: center; gap: 6px; margin-left: 4px; }
.zoom i { width: 5px; height: 1px; background: #555; }
.zoom .p { background: linear-gradient(#555, #555) 50% / 1px 5px no-repeat, linear-gradient(#555, #555) 50% / 5px 1px no-repeat; height: 5px; }
.track { width: 66px; height: 1px; background: #888; }
.track b { display: block; width: 3px; height: 8px; background: #555; margin: -4px 0 0 28.5px; }
.pct { width: 23px; margin-left: 9px; margin-right: -1px; }

/* taskbar */
.taskbar { height: 32px; flex: none; background: #1b1b1c; color: #ddd; display: flex; align-items: center; padding-left: 13px; font-size: 7.8px; line-height: 10.5px; }
.temp { width: 392px; }
.temp, .clock, .lang { white-space: nowrap; }
.apps { display: flex; align-items: center; gap: 13.2px; }
.apps svg { width: 16px; height: 16px; }
.pill { width: 147px; height: 22px; margin: 0 -4px 0 -4px; border-radius: 11px; background: #3a3a3b; display: flex; align-items: center; padding-left: 8px; gap: 7px; font-size: 8.4px; color: #ccc; }
.pill svg:first-child { width: 10px; height: 11px; }
.pill .scene { width: 34px; height: 18px; margin-left: auto; margin-right: 1px; }
.app { position: relative; width: 16px; height: 16px; }
.app em { position: absolute; right: -4px; top: -4px; min-width: 10px; height: 10px; line-height: 10px; border-radius: 5px; background: #cf6a60; color: #1b1b1b; font-style: normal; font-size: 7.5px; text-align: center; }
.app .wide { width: 14px; right: -6px; }
.dot::after { content: ""; position: absolute; left: 6px; bottom: -5px; width: 4px; height: 1.5px; background: #999; border-radius: 1px; }
.focus::before { content: ""; position: absolute; left: -5px; top: -5px; width: 26px; height: 26px; background: #2b2b2d; border-radius: 2px; }
.focus::after { content: ""; position: absolute; left: 3px; bottom: -5px; width: 10px; height: 2px; background: #dd8076; border-radius: 1px; }
.focus svg { position: relative; }
.green { color: #4d9a12; }
.red { color: #dd4c3f; }
.tray { margin-left: auto; display: flex; align-items: center; padding-right: 12px; }
.y1 { margin-right: 11px; } .y2 { margin-right: 11px; } .y3 { margin-right: 7px; } .lang { width: 30px; text-align: center; margin-right: 4px; } .lang + svg { margin-right: 4px; }
.clock { width: 50px; text-align: right; margin-left: -2px; margin-right: 6px; }
.y6 { margin-right: 11px; }

/* tooltip */
.tip { position: absolute; z-index: 5; left: 588px; top: 119px; width: 176px; height: 140px; background: #fff; border: 1px solid #8a8a8a; border-radius: 3px; box-shadow: 0 3px 6px rgba(0,0,0,.2); padding: 3px 4px 0 7px; font-size: 7.1px; line-height: 8.65px; color: #606060; letter-spacing: .13px; white-space: nowrap; }
.tip h4 { font-size: 7px; line-height: 10px; font-weight: 700; color: #606060; margin-bottom: 6.5px; letter-spacing: 0; }
.tip p { margin-bottom: 8.65px; }
.more { border-top: 1px solid #e2e2e2; margin: -5px 0 0 -4px; padding: 3px 0 0 3px; display: flex; gap: 5px; line-height: 12px; font-weight: 700; color: #2b5a91; font-size: 7px; letter-spacing: 0; }
```
FILE: sheet.js
```js
const colW = [17, 23, 39, 51, 156, 59, 84, 62, 34, 7, 25, 54, 48, 48, 58, 48, 48, 48, 48, 48, 48, 48, 48, 48, 48, 21];
const rowH = [11, 13, 12, 12, 15, 12, 12, 15, 12, 12, 12, 12];
for (let i = 12; i <= 39; i++) rowH.push(12);

const clients = [
  [1, '26-feb-11', 'Hsbc (Colon, Zona Libre)-Aminta', '514,81'],
  [1, '14-oct-12', 'Banco Nacional De Panamá-Lorena', '337,47'],
  [1, '23-ago-12', 'Motta Internacional-Susana', '123,14'],
  [1, '7-feb-10', 'Motta Internacional-Alma', '389,47'],
  [1, '11-jul-12', 'Admon. Zona Libre-Diomedes', '723,08'],
  [1, '2-ago-12', 'Irma Rivera Y Asociados-Yolanda', '619,15'],
  [1, '6-feb-11', 'Cuerpo Consular De Panamá-Manuel', '582,96'],
  [1, '27-sep-12', 'Cuerpo Consular De Panamá-Alicia', '716,87'],
  [2, '13-may-10', 'Virgilio Correa, S.A.-Andrés', '271,83'],
  [2, '11-feb-11', 'Citibank-Alina', '346,95'],
  [2, '25-jul-12', 'Confederación De Periodistas-Beatriz', '1,79'],
  [2, '25-jul-10', 'Confederación De Periodistas-Juan', '67,50'],
  [2, '12-dic-10', 'Banco Nacional De Panamá-Gisela', '450,09'],
  [2, '9-dic-10', 'Banco Nacional De Panamá-Aminta', '403,97'],
  [2, '14-oct-12', 'Migración (Yolanda Chanis)-Rafael', '448,37'],
  [3, '3-sep-12', 'Estudio De Danza Y Moda-Rubén', '113,60'],
  [3, '9-ene-10', 'Viajes Airemar-Susana', '468,19'],
  [3, '4-oct-12', 'Viajes Airemar-Diomedes', '776,53'],
  [3, '11-dic-12', 'Viajes Airemar-Anyuri', '478,95'],
  [3, '13-mar-10', 'Iphe-Fabrizio', '631,08'],
  [3, '23-jul-12', 'Motta Internacional-Aminta', '198,93'],
  [3, '6-jun-10', 'Oficentro-Rafael', '696,26'],
  [3, '13-feb-11', 'Viajes Airemar-Alma', '608,93'],
  [3, '6-ene-10', 'Kimberly Clark-Eduardo', '756,80'],
  [3, '3-mar-10', 'Hsbc (Colon, Zona Libre)-Manuel', '937,17'],
  [3, '19-dic-10', 'Suizo Zona Libre-Andrés', '77,45'],
  [4, '2-dic-12', 'Kimberly Clark-Rubén', '258,44'],
  [4, '24-mar-11', 'Banco Nacional De Panamá-Roxana', '202,17']
];

const sheet = document.getElementById('sheet');
sheet.style.gridTemplateColumns = colW.map(w => w + 'px').join(' ');
sheet.style.gridTemplateRows = rowH.map(h => h + 'px').join(' ');

const used = {};

// row 0 / column 0 are the headings
function put(row, col, html, cls, cols = 1, rows = 1) {
  const el = document.createElement('div');
  el.className = 'cell ' + cls;
  el.innerHTML = html;
  el.style.gridArea = `${row + 1} / ${col + 1} / span ${rows} / span ${cols}`;
  for (let r = row; r < row + rows; r++) {
    for (let c = col; c < col + cols; c++) used[r + '-' + c] = true;
  }
  sheet.appendChild(el);
}

put(0, 0, '', 'colhead');
for (let c = 1; c <= 25; c++) {
  put(0, c, c < 25 ? String.fromCharCode(64 + c) : '', 'colhead' + (c === 4 ? ' sel' : ''));
}
for (let r = 1; r <= 39; r++) put(r, 0, r, 'rowhead' + (r > 11 ? ' sel' : ''));

// instructions
put(1, 1, 'Realice las siguientes actividades dejando formulados todos los campos que lo requieran:', 'bold title', 5);
put(2, 1, '1', 'num', 1, 2);
put(2, 2, '<p>En la columna Clientes-Ejecutivo(a), note que el primero esta separado del segundo por un guión, <b>usando fórmulas</b>, separe el nombre de los<br>Clientes del nombre del Ejecutivo(a), de tal manera que en la columna D se encuentre solo el nombre del Ejecutivo.</p>', 'text ins1', 9, 2);
put(5, 1, '2', 'num', 1, 2);
put(5, 2, '<p>Utilizando la Validacion de Datos, haga que todas las celdas de la columna <b>F</b>, permitan elegir la "Seccion" respectiva a cada Grupo, desde<br>una lista desplegable restringida a los datos del rango <b>J12:J15</b></p>', 'text ins2', 9, 2);
put(8, 1, '3', 'num', 1, 2);
put(8, 2, '<p>Usando las operaciones que considere,diligencie la <b>columna G</b> con el departamento correspondiente a cada grupo para los usuarios del<br>listado.</p>', 'text ins3', 9, 2);

// main table
put(11, 2, 'Grupo', 'box navy c top lft');
put(11, 3, 'Fecha', 'box navy c top');
put(11, 4, 'Clientes   -    Ejecutivo(a)', 'box blue c top');
put(11, 5, 'Ejecutivo', 'yellow bold c top');
put(11, 6, 'Seccion', 'yellow bold c top');
put(11, 7, 'Departamento', 'yellow bold c top');
put(11, 8, 'Ventas', 'box navy c top');

clients.forEach((d, i) => {
  const r = 12 + i;
  put(r, 2, d[0], 'box c lft');
  put(r, 3, d[1], 'box c gl');
  put(r, 4, d[2], 'box gl' + (i ? ' grey' : ''));
  for (let c = 5; c <= 7; c++) put(r, c, '', 'yellow');
  put(r, 8, d[3], 'box r');
});

// lookup tables
put(11, 10, 'Grupo', 'yellow top lft');
put(11, 11, 'Seccion', 'yellow top');
put(11, 13, 'Grupo', 'yellow top lft');
put(11, 14, 'Departamento', 'yellow top');
['Rojo', 'Blanco', 'Negro', 'Azul'].forEach((s, i) => {
  put(12 + i, 10, i + 1, 'box r lft');
  put(12 + i, 11, s, 'box');
});
['Comercial', 'Telefonia', 'Financiero', 'Contable'].forEach((s, i) => {
  put(12 + i, 13, i + 1, 'box r lft');
  put(12 + i, 14, s, 'box');
});

for (let r = 1; r <= 39; r++) {
  for (let c = 1; c <= 25; c++) {
    if (!used[r + '-' + c]) put(r, c, '', '');
  }
}
```
